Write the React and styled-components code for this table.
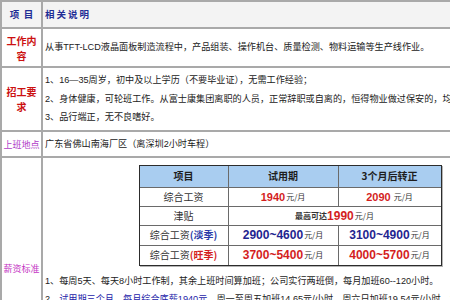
import React from "react";
import styled, { createGlobalStyle } from "styled-components";

const Global = createGlobalStyle`
  html, body { margin: 0; padding: 0; overflow: hidden; background: #fff; }
  body { font-family: "Liberation Sans", "Noto Sans CJK SC", sans-serif; }
`;

const Sheet = styled.div`
  display: grid;
  grid-template-columns: 39px minmax(0, 1fr);
  grid-template-rows: 25px 37px 62px 24px 220px;
  gap: 2px;
  padding: 2px;
  width: 539px;
  box-sizing: border-box;
  background: #a9a9a9;
`;

const Label = styled.div`
  background: ${(p) => (p.$head ? "#f3f3f3" : "#fff")};
  display: flex;
  align-items: center;
  justify-content: center;
  text-align: center;
  color: ${(p) => p.$color};
  font-weight: ${(p) => (p.$bold ? 700 : 400)};
  font-size: ${(p) => p.$size}px;
  line-height: 15px;
  font-family: "Noto Sans CJK SC", sans-serif;
  overflow: hidden;
`;

const Content = styled.div`
  background: ${(p) => (p.$head ? "#f3f3f3" : "#fff")};
  display: flex;
  flex-direction: column;
  justify-content: ${(p) => (p.$top ? "flex-start" : "center")};
  padding: ${(p) => (p.$top ? "7px 2px 0" : "0 2px")};
  font-size: 9.15px;
  line-height: 18.5px;
  color: #222;
  overflow: hidden;
`;

const HeadTitle = styled.div`
  color: #1f2d96;
  font-weight: 700;
  font-size: 9.5px;
  letter-spacing: 2px;
  font-family: "Noto Sans CJK SC", sans-serif;
`;

const Line = styled.div`
  white-space: nowrap;
`;

const Blue = styled.span`
  color: #1c22a8;
`;

const SalaryGrid = styled.div`
  display: grid;
  grid-template-columns: 88px 109px 102px;
  grid-template-rows: 21px 18px 18px 19px 19px;
  gap: 1px;
  width: max-content;
  margin: 0 auto;
  background: #6a6a6a;
  border: 1px solid #2c2c2c;
  box-shadow: 1px 1px 0 #b5b5b5;
`;

const Cell = styled.div`
  grid-column: span ${(p) => p.$span || 1};
  background: ${(p) => (p.$head ? "#a9cdf0" : "#fff")};
  display: flex;
  align-items: center;
  justify-content: center;
  white-space: nowrap;
  font-size: 10px;
  font-weight: ${(p) => (p.$head ? 700 : 400)};
  color: ${(p) => (p.$head ? "#1e1e1e" : "#333")};
  font-family: "Noto Sans CJK SC", sans-serif;
`;

const Season = styled.span`
  color: ${(p) => p.$color};
  font-weight: 700;
`;

const Num = styled.span`
  font-family: "Liberation Sans", sans-serif;
  font-weight: 700;
  font-size: ${(p) => p.$size || 12}px;
  color: ${(p) => p.$color};
`;

const Unit = styled.span`
  font-size: 8px;
  color: #333;
  margin-left: ${(p) => (p.$gap ? 3 : 1)}px;
  font-family: "Noto Sans CJK SC", sans-serif;
`;

const Small = styled.span`
  font-size: 8px;
  font-weight: 700;
  color: #333;
`;

const RED = "#d41e1e";
const NAVY = "#1f2590";

const Notes = styled.div`
  margin-top: 6px;
  line-height: 18px;
`;

export default function App() {
  return (
    <>
      <Global />
      <Sheet>
        <Label $head $bold $size={9.5} $color="#1f2d96">项&nbsp;&nbsp;目</Label>
        <Content $head>
          <HeadTitle>相关说明</HeadTitle>
        </Content>

        <Label $bold $size={10} $color="#cc1111">工作内容</Label>
        <Content>
          <Line>从事TFT-LCD液晶面板制造流程中，产品组装、操作机台、质量检测、物料运输等生产线作业。</Line>
        </Content>

        <Label $bold $size={10} $color="#cc1111">招工要求</Label>
        <Content>
          <Line>1、16—35周岁，初中及以上学历（不要毕业证），无需工作经验；</Line>
          <Line>2、身体健康，可轮班工作。从富士康集团离职的人员，正常辞职或自离的，恒得物业做过保安的，均不予录用；</Line>
          <Line>3、品行端正，无不良嗜好。</Line>
        </Content>

        <Label $size={9} $color="#b03cc8">上班地点</Label>
        <Content>
          <Line>广东省佛山南海厂区（离深圳2小时车程）</Line>
        </Content>

        <Label $size={9} $color="#c434c4">薪资标准</Label>
        <Content $top>
          <SalaryGrid>
            <Cell $head>项目</Cell>
            <Cell $head>试用期</Cell>
            <Cell $head>3个月后转正</Cell>

            <Cell>综合工资</Cell>
            <Cell>
              <Num $size={11} $color={RED}>1940</Num>
              <Unit>元/月</Unit>
            </Cell>
            <Cell>
              <Num $size={11} $color={RED}>2090</Num>
              <Unit $gap>元/月</Unit>
            </Cell>

            <Cell>津贴</Cell>
            <Cell $span={2}>
              <Small>最高可达</Small>
              <Num $color={RED}>1990</Num>
              <Unit>元/月</Unit>
            </Cell>

            <Cell>
              综合工资<Season $color="#2a3aa8">(淡季)</Season>
            </Cell>
            <Cell>
              <Num $color={NAVY}>2900~4600</Num>
              <Unit>元/月</Unit>
            </Cell>
            <Cell>
              <Num $color={NAVY}>3100~4900</Num>
              <Unit>元/月</Unit>
            </Cell>

            <Cell>
              综合工资<Season $color={RED}>(旺季)</Season>
            </Cell>
            <Cell>
              <Num $color={RED}>3700~5400</Num>
              <Unit>元/月</Unit>
            </Cell>
            <Cell>
              <Num $color={RED}>4000~5700</Num>
              <Unit>元/月</Unit>
            </Cell>
          </SalaryGrid>
          <Notes>
            <Line>1、每周5天、每天8小时工作制，其余上班时间算加班；公司实行两班倒，每月加班60--120小时。</Line>
            <Line>
              2、<Blue>试用期三个月</Blue>，<Blue>每月综合底薪1940元</Blue>，周一至周五加班14.65元/小时，周六日加班19.54元/小时，法定节假日加班29.31元/小时；
            </Line>
            <Line>3、转正后每月综合底薪2090元，周一至周五加班15.78元/小时，周六日加班21.04元/小时；</Line>
            <Line>4、津贴包括绩效奖、全勤奖、夜班津贴等，最高可达1990元/月；</Line>
            <Line>5、每月10日发放上月工资，工资卡由公司统一办理。</Line>
          </Notes>
        </Content>
      </Sheet>
    </>
  );
}
